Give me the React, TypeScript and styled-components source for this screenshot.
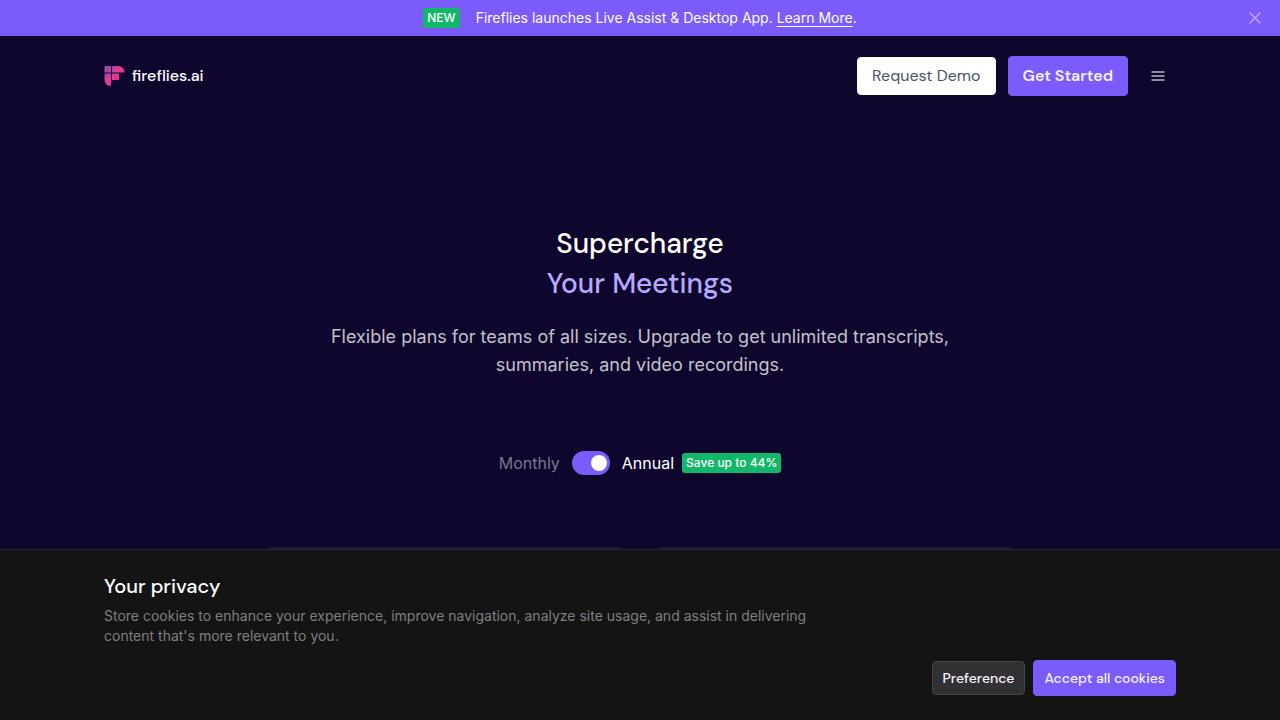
import React, { useState } from "react";
import styled, { createGlobalStyle } from "styled-components";

const body = `Inter, "Liberation Sans", sans-serif`;
const display = `"DM Sans", Inter, "Liberation Sans", sans-serif`;

const GlobalStyle = createGlobalStyle`
  *, *::before, *::after { box-sizing: border-box; }
  body { margin: 0; background: #0f062d; color: #fff; font-family: ${body}; }
  h1, h2, p { margin: 0; font-weight: 400; }
  button { font-family: inherit; cursor: pointer; }
`;

const Announcement = styled.div`
  display: flex;
  align-items: center;
  min-height: 36px;
  padding: 0 16px 0 16px;
  background: #7b5cfa;
`;

const AnnouncementText = styled.p`
  flex: 1;
  display: flex;
  align-items: center;
  justify-content: center;
  gap: 16px;
  padding-left: 18px;
  font-size: 14px;
  line-height: 20px;
  a { color: inherit; text-underline-offset: 3px; }
`;

const Badge = styled.span`
  padding: 0 4px;
  border-radius: 3px;
  background: #12b76a;
  color: #fff;
  font-size: 12px;
  line-height: 20px;
  font-weight: 500;
`;

const IconButton = styled.button<{ $size: number }>`
  display: flex;
  align-items: center;
  justify-content: center;
  width: ${(p) => p.$size}px;
  height: ${(p) => p.$size}px;
  padding: 0;
  border: 0;
  background: none;
  color: #8e899d;
`;

const CloseButton = styled(IconButton)`
  color: #bdaefd;
`;

const Container = styled.div`
  width: 100%;
  max-width: 1152px;
  margin: 0 auto;
  padding: 0 40px;
`;

const Nav = styled(Container)`
  display: flex;
  align-items: center;
  justify-content: space-between;
  padding-top: 20px;
  padding-bottom: 20px;
`;

const Logo = styled.a`
  display: flex;
  align-items: center;
  gap: 7px;
  color: #fff;
  text-decoration: none;
  font-family: ${display};
  font-size: 16px;
  line-height: 20px;
  font-weight: 500;
`;

const NavActions = styled.div`
  display: flex;
  align-items: center;
  gap: 12px;
`;

const Button = styled.button<{ $tone: "light" | "primary" | "dark"; $small?: boolean }>`
  height: ${(p) => (p.$small ? 36 : 40) - (p.$tone === "primary" ? 0 : 2)}px;
  padding: 0 ${(p) => (p.$small ? 10 : 14)}px;
  border: 1px solid ${(p) => ({ light: "#fff", primary: "#7b5cfa", dark: "#434345" })[p.$tone]};
  border-radius: 4px;
  background: ${(p) => ({ light: "#fff", primary: "#7b5cfa", dark: "#313133" })[p.$tone]};
  color: ${(p) => (p.$tone === "light" ? "#475467" : "#f5f2ff")};
  font-family: ${display};
  font-size: ${(p) => (p.$small ? 14 : 16)}px;
  line-height: 20px;
  font-weight: ${(p) => (p.$tone === "light" ? 400 : p.$small ? 500 : 600)};
  white-space: nowrap;
`;

const Hero = styled(Container)`
  display: flex;
  flex-direction: column;
  align-items: center;
  padding-top: 108px;
  text-align: center;
`;

const Title = styled.h1`
  font-family: ${display};
  font-size: 28px;
  line-height: 40px;
  font-weight: 500;
  font-optical-sizing: none;
  span { display: block; color: #b9a8ff; }
`;

const Lead = styled.p`
  max-width: 640px;
  margin-top: 19px;
  color: #c3c1ca;
  font-size: 18px;
  line-height: 28px;
`;

const Billing = styled.div`
  display: flex;
  align-items: center;
  gap: 12px;
  margin-top: 72px;
  font-size: 16px;
  line-height: 24px;
`;

const Period = styled.span<{ $active: boolean }>`
  color: ${(p) => (p.$active ? "#fff" : "#7b768c")};
`;

const AnnualGroup = styled.div`
  display: flex;
  align-items: center;
  gap: 8px;
`;

const Toggle = styled.input`
  appearance: none;
  display: flex;
  align-items: center;
  width: 38px;
  height: 24px;
  margin: 0;
  padding: 0 3px;
  border-radius: 12px;
  background: #3b3356;
  cursor: pointer;
  &::before {
    content: "";
    width: 16px;
    height: 16px;
    border-radius: 50%;
    background: #fff;
  }
  &:checked { background: #7b5cfa; justify-content: flex-end; }
`;

const Plans = styled.div`
  display: grid;
  grid-template-columns: 1fr 1fr;
  gap: 24px;
  width: 100%;
  max-width: 756px;
  margin-top: 72px;
`;

const Plan = styled.section`
  min-height: 160px;
  border-radius: 12px;
  background: #231b3f;
`;

const CookieBar = styled.aside`
  position: fixed;
  left: 0;
  right: 0;
  bottom: 0;
  border-top: 1px solid #29292a;
  background: #141414;
`;

const CookieContent = styled(Container)`
  padding-top: 24px;
  padding-bottom: 24px;
`;

const CookieTitle = styled.h2`
  font-family: ${display};
  font-size: 20px;
  line-height: 24px;
  font-weight: 500;
`;

const CookieText = styled.p`
  max-width: 712px;
  margin-top: 8px;
  color: #7f7f81;
  font-size: 14px;
  line-height: 20px;
`;

const CookieActions = styled.div`
  display: flex;
  align-items: center;
  justify-content: flex-end;
  gap: 8px;
  margin-top: 14px;
`;

const LogoMark = () => (
  <svg width="21" height="21" viewBox="0 0 21 21" aria-hidden="true">
    <defs>
      <linearGradient id="mark" x1="0" y1="0" x2="1" y2="1">
        <stop offset="0" stopColor="#8b48b0" />
        <stop offset="0.5" stopColor="#e23b8c" />
        <stop offset="1" stopColor="#c52f83" />
      </linearGradient>
    </defs>
    <path
      fill="url(#mark)"
      d="M0.5 0H7V6.5H0.5ZM8 0H14.5A6 6 0 0 1 20.5 6.5H8ZM0.5 7.5H7V20H6.5A6 6 0 0 1 0.5 14ZM8 7.5H15V14H8Z"
    />
  </svg>
);

export default function App() {
  const [annual, setAnnual] = useState(true);
  return (
    <>
      <GlobalStyle />
      <Announcement>
        <AnnouncementText>
          <Badge>NEW</Badge>
          <span>
            Fireflies launches Live Assist &amp; Desktop App. <a href="#learn">Learn More</a>.
          </span>
        </AnnouncementText>
        <CloseButton $size={18} aria-label="Close">
          <svg width="12" height="12" viewBox="0 0 12 12" fill="none" stroke="currentColor" strokeWidth="1.4" strokeLinecap="round">
            <path d="M1 1L11 11M11 1L1 11" />
          </svg>
        </CloseButton>
      </Announcement>
      <header>
        <Nav as="nav">
          <Logo href="#home">
            <LogoMark />
            fireflies.ai
          </Logo>
          <NavActions>
            <Button $tone="light">Request Demo</Button>
            <Button $tone="primary">Get Started</Button>
            <IconButton $size={36} aria-label="Menu">
              <svg width="14" height="10" viewBox="0 0 14 10" fill="currentColor">
                <path d="M0.5 0H13.5V2H0.5ZM0.5 4H13.5V6H0.5ZM0.5 8H13.5V10H0.5Z" />
              </svg>
            </IconButton>
          </NavActions>
        </Nav>
      </header>
      <Hero as="main">
        <Title>
          Supercharge <span>Your Meetings</span>
        </Title>
        <Lead>
          Flexible plans for teams of all sizes. Upgrade to get unlimited transcripts, summaries, and video recordings.
        </Lead>
        <Billing>
          <Period $active={!annual}>Monthly</Period>
          <Toggle
            type="checkbox"
            role="switch"
            aria-label="Annual billing"
            checked={annual}
            onChange={(e) => setAnnual(e.target.checked)}
          />
          <AnnualGroup>
            <Period $active={annual}>Annual</Period>
            <Badge>Save up to 44%</Badge>
          </AnnualGroup>
        </Billing>
        <Plans>
          <Plan />
          <Plan />
        </Plans>
      </Hero>
      <CookieBar>
        <CookieContent>
          <CookieTitle>Your privacy</CookieTitle>
          <CookieText>
            Store cookies to enhance your experience, improve navigation, analyze site usage, and assist in delivering
            content that's more relevant to you.
          </CookieText>
          <CookieActions>
            <Button $tone="dark" $small>Preference</Button>
            <Button $tone="primary" $small>Accept all cookies</Button>
          </CookieActions>
        </CookieContent>
      </CookieBar>
    </>
  );
}
